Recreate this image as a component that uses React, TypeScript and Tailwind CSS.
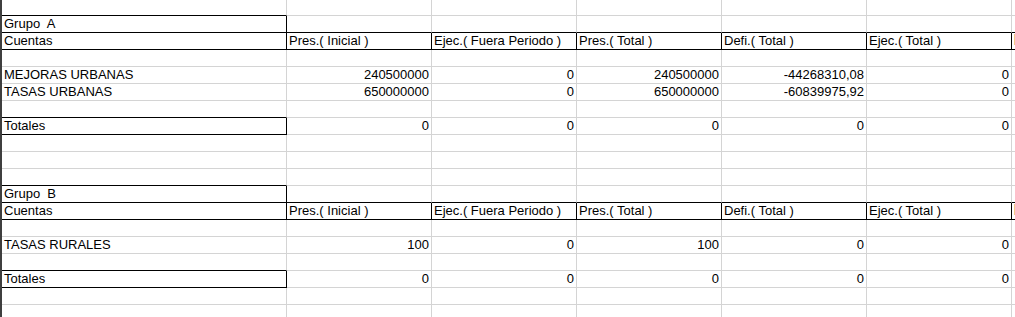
import clsx from "clsx";

type RowKind = "blank" | "group" | "header" | "data" | "total";

interface SheetRow {
  kind: RowKind;
  cells: string[];
}

const HEADERS = [
  "Cuentas",
  "Pres.( Inicial )",
  "Ejec.( Fuera Periodo )",
  "Pres.( Total )",
  "Defi.( Total )",
  "Ejec.( Total )",
  "",
];

const blank: SheetRow = { kind: "blank", cells: [] };

const rows: SheetRow[] = [
  blank,
  { kind: "group", cells: ["Grupo  A"] },
  { kind: "header", cells: HEADERS },
  blank,
  { kind: "data", cells: ["MEJORAS URBANAS", "240500000", "0", "240500000", "-44268310,08", "0"] },
  { kind: "data", cells: ["TASAS URBANAS", "650000000", "0", "650000000", "-60839975,92", "0"] },
  blank,
  { kind: "total", cells: ["Totales", "0", "0", "0", "0", "0"] },
  blank,
  blank,
  blank,
  { kind: "group", cells: ["Grupo  B"] },
  { kind: "header", cells: HEADERS },
  blank,
  { kind: "data", cells: ["TASAS RURALES", "100", "0", "100", "0", "0"] },
  blank,
  { kind: "total", cells: ["Totales", "0", "0", "0", "0", "0"] },
  blank,
  blank,
];

const COLS = 7;

// which cells carry the thin black box border
function boxed(r: number, c: number) {
  const row = rows[r];
  if (!row) return false;
  if (row.kind === "header") return true;
  if (row.kind === "group" || row.kind === "total") return c === 0;
  return false;
}

function Cell({
  r,
  c,
  text,
  right,
}: {
  r: number;
  c: number;
  text: string;
  right: boolean;
}) {
  const blackBottom = boxed(r, c) || boxed(r + 1, c);
  const blackRight = boxed(r, c) || (c < COLS - 1 && boxed(r, c + 1));
  const isHeaderTail = rows[r].kind === "header" && c === COLS - 1;

  return (
    <div
      className={clsx(
        "h-full overflow-hidden whitespace-pre border-b border-r px-[2px] text-[13px] leading-[16px] text-black",
        c === 0 ? "w-[285px] shrink-0" : c === COLS - 1 ? "min-w-0 flex-1" : "w-[145px] shrink-0",
        blackBottom ? "border-b-black" : "border-b-[#d4d4d4]",
        blackRight ? "border-r-black" : "border-r-[#d4d4d4]",
        right && "text-right"
      )}
    >
      {isHeaderTail ? <div className="mt-[1px] h-[11px] w-px bg-[#f4c888]" /> : text}
    </div>
  );
}

export default function App() {
  return (
    <div
      className="h-[317px] w-[1015px] overflow-hidden border-l-2 border-l-[#3f3f3f] bg-white"
      style={{ fontFamily: '"Liberation Sans", Arial, sans-serif' }}
    >
      {rows.map((row, r) => (
        <div key={r} className={clsx("flex", r === 0 ? "h-[16px]" : "h-[17px]")}>
          {Array.from({ length: COLS }).map((_, c) => (
            <Cell
              key={c}
              r={r}
              c={c}
              text={row.cells[c] ?? ""}
              right={c > 0 && row.kind !== "header"}
            />
          ))}
        </div>
      ))}
    </div>
  );
}
